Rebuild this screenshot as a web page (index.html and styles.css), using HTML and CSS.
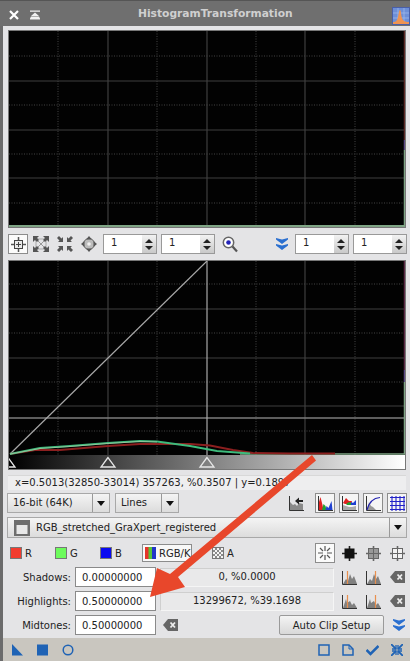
FILE: index.html
```html
<!DOCTYPE html>
<html lang="en">
<head>
<meta charset="utf-8">
<title>HistogramTransformation</title>
<link rel="stylesheet" href="styles.css">
</head>
<body>
<div class="window">
  <header class="titlebar">
    <svg class="tb-close" width="12" height="12" viewBox="0 0 12 12"><path d="M2 2l8 8M10 2l-8 8" stroke="#fff" stroke-width="2.2" fill="none"/></svg>
    <svg class="tb-shade" width="12" height="10" viewBox="0 0 12 10"><path d="M1 .5h10v1.300H1zM6 2.500l4 3.500H2zM2 6.500h8L11 8.500v1H1v-1z" fill="#f2f2f2"/></svg>
    <div class="tb-title">HistogramTransformation</div>
    <svg class="tb-icon" width="18" height="18" viewBox="0 0 18 18"><rect x=".5" y=".5" width="17" height="17" fill="#6d8fd8" stroke="#4a5fa8"/><path d="M1 6h16M1 11h16M6 1v16M12 1v16" stroke="#9fb8ea" stroke-width=".8"/><path d="M1 17v-2c3 0 4-1 5-5 1-4 1-7 2-7s1 5 2 8c1 3 3 4 7 4v2z" fill="#ef9350"/></svg>
  </header>

  <main class="content">
    <div class="chart">
      <svg width="396" height="196" viewBox="9 31 396 196">
        <rect x="9" y="31" width="396" height="196" fill="#020202"/>
        <path class="dots" d="M9 56h396M9 105h396M9 154h396M9 203h396M58 31v196M157 31v196M256 31v196M355 31v196"/>
        <path class="grid" d="M9 81h396M9 130h396M9 178h396M108 31v196M207 31v196M305 31v196"/>
        <path d="M9 226h396" stroke="#7fa585" stroke-width="2"/>
        <path d="M404.500 31v109" stroke="#5c2a26" stroke-width="1.500"/>
        <path d="M404.500 140v10" stroke="#5d4a86" stroke-width="1.500"/>
        <path d="M404.500 150v77" stroke="#7fa585" stroke-width="1.500"/>
      </svg>
    </div>

    <div class="toolbar">
      <button class="tool on"><svg width="15" height="15" viewBox="0 0 15 15"><path d="M7.500 0v15M0 7.500h15" stroke="#555" stroke-width="1.500"/><rect x="3.500" y="3.500" width="8" height="8" fill="#e8e8e8" stroke="#444"/><path d="M7.500 5v5M5 7.500h5" stroke="#444"/></svg></button>
      <span class="tool t1"><svg width="16" height="16" viewBox="0 0 16 16"><path d="M3 3h10v10H3z" fill="none" stroke="#aaa"/><path d="M3 3l10 10M13 3L3 13" stroke="#999"/><path d="M0 0h6L4 2 6 4 4 6 2 4 0 6zM16 0v6l-2-2-2 2-2-2 2-2-2-2zM0 16v-6l2 2 2-2 2 2-2 2 2 2zM16 16h-6l2-2-2-2 2-2 2 2 2-2z" fill="#555"/></svg></span>
      <span class="tool t2"><svg width="16" height="16" viewBox="0 0 16 16"><path d="M6 6H1l1.500-1.500L0 2l2-2 2.500 2.500L6 1zM10 6V1l1.500 1.500L14 0l2 2-2.500 2.500L15 6zM6 10v5l-1.500-1.500L2 16l-2-2 2.500-2.500L1 10zM10 10h5l-1.500 1.500L16 14l-2 2-2.500-2.500L10 15z" fill="#555"/></svg></span>
      <span class="tool t3"><svg width="16" height="16" viewBox="0 0 16 16"><circle cx="8" cy="8" r="5.500" fill="#bbb" stroke="#666"/><circle cx="8" cy="8" r="1.800" fill="#f0f0f0"/><path d="M8 0l3 3.500H5zM8 16l-3-3.500h6zM0 8l3.500-3v6zM16 8l-3.500 3V5z" fill="#555"/></svg></span>
      <div class="spin s1"><span class="val">1</span><span class="arrows"><i class="up"></i><i class="dn"></i></span></div>
      <div class="spin s2"><span class="val">1</span><span class="arrows"><i class="up"></i><i class="dn"></i></span></div>
      <svg class="zoom" width="16" height="17" viewBox="0 0 16 17"><circle cx="6.500" cy="6.500" r="5.200" fill="#fff" stroke="#666" stroke-width="1.500"/><circle cx="6.500" cy="6.500" r="2.300" fill="#2222b8"/><path d="M10.500 10.500l4.500 5" stroke="#555" stroke-width="2.200"/></svg>
      <svg class="chev c-top" width="12" height="12" viewBox="0 0 12 12"><path d="M0 0l6 1.500L12 0v1.500L6 6 0 1.500zM0 6l6 1.500L12 6v1.500L6 12 0 7.500z" fill="#2a6fd0"/></svg>
      <div class="spin s3"><span class="val">1</span><span class="arrows"><i class="up"></i><i class="dn"></i></span></div>
      <div class="spin s4"><span class="val">1</span><span class="arrows"><i class="up"></i><i class="dn"></i></span></div>
    </div>

    <div class="chart chart2">
      <svg width="396" height="208" viewBox="9 261 396 208">
        <defs>
          <linearGradient id="ramp"><stop offset="0" stop-color="#000"/><stop offset="1" stop-color="#fff"/></linearGradient>
        </defs>
        <rect x="9" y="261" width="396" height="194" fill="#020202"/>
        <rect x="9" y="455" width="396" height="14" fill="url(#ramp)"/>
        <path class="dots" d="M9 284h396M9 333h396M9 382h396M9 431h396M58 261v194M157 261v194M256 261v194M355 261v194"/>
        <path class="grid" d="M9 309h396M9 358h396M9 406h396M108 261v194M305 261v194"/>
        <path d="M9 418h396" stroke="#7d7d7d" stroke-width="1.500"/>
        <path d="M207 261v194" stroke="#a9a9a9" stroke-width="1.200"/>
        <path d="M10 454L207 261" stroke="#a8a8a8" stroke-width="1.200" fill="none"/>
        <path d="M404.500 261v109" stroke="#5c2a46" stroke-width="1.500"/>
        <path d="M404.500 370v12" stroke="#5d4a86" stroke-width="1.500"/>
        <path d="M404.500 382v72" stroke="#7fa585" stroke-width="1.500"/>
        <path d="M240 454H405" stroke="#7fa585" stroke-width="1.500"/>
        <path d="M10 454L35 450 60 450 108 446 140 444 190 444 210 445.500 233 450 253 453 290 453.500 335 453.500" stroke="#8c1f1f" stroke-width="1.800" fill="none"/>
        <path d="M10 454L40 448 70 446 108 443 140 441 157 441.500 190 446 217 451 250 453.500" stroke="#3dbb7c" stroke-width="1.800" fill="none"/>
        <path d="M10 454L40 448.500 70 446.500 108 443.500 140 441.500 157 442" stroke="#b8c8a8" stroke-width=".7" fill="none"/>
        <path class="tri" d="M8 457.500L15 467H8z"/>
        <path class="tri" d="M108 457.500L101 467H115z"/>
        <path class="tri" d="M207 457.500L200 467H214z"/>
      </svg>
    </div>

    <div class="readout">x=0.5013(32850-33014) 357263, %0.3507 | y=0.1897</div>

    <div class="options">
      <div class="combo c-bit"><span class="combo-label">16-bit (64K)</span><span class="combo-drop"><i></i></span></div>
      <div class="combo c-mode"><span class="combo-label">Lines</span><span class="combo-drop"><i></i></span></div>
      <div class="opt-icons">
        <svg class="oi plain" width="15" height="15" viewBox="0 0 15 15"><path d="M.5 0v14.500H15" stroke="#333" fill="none"/><path d="M1 14V6l3 3 2-1 2 2 2-3 4 1v6z" fill="#8a8a8a"/><path d="M6 5l4-3.500V4h4v2h-4v2.500z" fill="#222"/></svg>
        <span class="oi box"><svg width="15" height="15" viewBox="0 0 15 15"><path d="M.5 0v14.500H15" stroke="#333" fill="none"/><path d="M1 14V6l1.500-5 2 8 1 5z" fill="#e02020"/><path d="M4 14l1.500-6 2 2 1 4z" fill="#22a030"/><path d="M7.500 14l1-4 2 2 3-7 1 9z" fill="#2040d0"/></svg></span>
        <span class="oi box"><svg width="15" height="15" viewBox="0 0 15 15"><path d="M.5 0v14.500H15" stroke="#333" fill="none"/><path d="M1 14V9l3 1 3 1 3 0 4-1v4z" fill="#aaa"/><path d="M1 7l3-5 3 3h3l-1 3H3z" fill="#e02020"/><path d="M4 8l3-2 3 1 1 2H5z" fill="#22a030"/><path d="M9 6l2 1 3-3v5H9z" fill="#2040d0"/></svg></span>
        <span class="oi box"><svg width="15" height="15" viewBox="0 0 15 15"><path d="M.5 0v14.500H15" stroke="#333" fill="none"/><path d="M1 14l2-8 2 4 2 1 3 3z" fill="#999"/><path d="M1 14C3 6 7 2 14 1.500" stroke="#2222b0" stroke-width="1.200" fill="none"/></svg></span>
        <span class="oi box"><svg width="15" height="15" viewBox="0 0 15 15"><path d="M0 1.500h15M0 5.500h15M0 9.500h15M0 13.500h15M2 0v15M6 0v15M10 0v15M14 0v15" stroke="#2222c8" stroke-width="1.100"/></svg></span>
      </div>
    </div>

    <div class="combo view">
      <svg class="view-icon" width="16" height="16" viewBox="0 0 16 16"><rect width="16" height="16" fill="#6e6e6e"/><rect x="2.500" y="5" width="11" height="9" fill="#e8e8e8"/></svg>
      <span class="combo-label">RGB_stretched_GraXpert_registered</span>
      <span class="combo-drop"><i></i></span>
    </div>

    <div class="channels">
      <span class="swatch red"></span><span class="ch-label l-r">R</span>
      <span class="swatch green"></span><span class="ch-label l-g">G</span>
      <span class="swatch blue"></span><span class="ch-label l-b">B</span>
      <span class="rgbk"><svg width="11" height="12" viewBox="0 0 11 12"><rect width="4" height="12" fill="#e5352b"/><rect x="3.500" width="4" height="12" fill="#58c43a"/><rect x="7" width="4" height="12" fill="#2336c8"/></svg>RGB/K</span>
      <span class="swatch checker"></span><span class="ch-label l-a">A</span>
      <div class="clip-icons">
        <span class="clipbtn on"><svg width="14" height="14" viewBox="0 0 14 14"><path d="M7 0v5M7 9v5M0 7h5M9 7h5M2 2l3 3M9 9l3 3M12 2L9 5M5 9l-3 3" stroke="#555" stroke-width="1.200"/></svg></span>
        <svg width="15" height="15" viewBox="0 0 15 15"><path d="M7.500 0v15M0 7.500h15" stroke="#222" stroke-width="1.600"/><rect x="2.500" y="2.500" width="10" height="10" fill="#111"/></svg>
        <svg width="15" height="15" viewBox="0 0 15 15"><path d="M7.500 0v15M0 7.500h15" stroke="#666" stroke-width="1.600"/><rect x="2.500" y="2.500" width="10" height="10" fill="#999" stroke="#666"/><path d="M7.500 3v9M3 7.500h9" stroke="#666"/></svg>
        <svg width="15" height="15" viewBox="0 0 15 15"><path d="M7.500 0v15M0 7.500h15" stroke="#666" stroke-width="1.600"/><rect x="2.500" y="2.500" width="10" height="10" fill="#f2f2f2" stroke="#666"/><path d="M7.500 3v9M3 7.500h9" stroke="#666"/></svg>
      </div>
    </div>

    <div class="param">
      <label>Shadows:</label><div class="field">0.00000000</div><div class="stat">0, %0.0000</div>
      <svg class="mini" width="15" height="15" viewBox="0 0 15 15"><path d="M.5 1v13.500H15" stroke="#333" fill="none"/><path d="M1 14l3-5 2 2 2-7 2 5 2-3 3 8z" fill="#808080"/><path d="M5.500 1v13" stroke="#e98f4e" stroke-width="1.200"/></svg>
      <svg class="mini" width="15" height="15" viewBox="0 0 15 15"><path d="M.5 1v13.500H15" stroke="#333" fill="none"/><path d="M1 14l3-5 2 2 2-7 2 5 2-3 3 8z" fill="#808080"/><path d="M9.500 1v13" stroke="#e98f4e" stroke-width="1.200"/></svg>
      <svg class="mini del" width="15" height="12" viewBox="0 0 15 12"><path d="M5 0h10v12H5L0 6z" fill="#666"/><path d="M7.500 3.500l4.500 5M12 3.500l-4.500 5" stroke="#eee" stroke-width="1.800"/></svg>
    </div>
    <div class="param">
      <label>Highlights:</label><div class="field">0.50000000</div><div class="stat">13299672, %39.1698</div>
      <svg class="mini" width="15" height="15" viewBox="0 0 15 15"><path d="M.5 1v13.500H15" stroke="#333" fill="none"/><path d="M1 14l3-9 1 4 3-2 2 4 2-2 3 5z" fill="#808080"/><path d="M5.500 1v13" stroke="#e98f4e" stroke-width="1.200"/></svg>
      <svg class="mini" width="15" height="15" viewBox="0 0 15 15"><path d="M.5 1v13.500H15" stroke="#333" fill="none"/><path d="M1 14l3-9 1 4 3-2 2 4 2-2 3 5z" fill="#808080"/><path d="M9.500 1v13" stroke="#e98f4e" stroke-width="1.200"/></svg>
      <svg class="mini del" width="15" height="12" viewBox="0 0 15 12"><path d="M5 0h10v12H5L0 6z" fill="#666"/><path d="M7.500 3.500l4.500 5M12 3.500l-4.500 5" stroke="#eee" stroke-width="1.800"/></svg>
    </div>
    <div class="param">
      <label>Midtones:</label><div class="field">0.50000000</div>
      <svg class="mini del single" width="15" height="12" viewBox="0 0 15 12"><path d="M5 0h10v12H5L0 6z" fill="#666"/><path d="M7.500 3.500l4.500 5M12 3.500l-4.500 5" stroke="#eee" stroke-width="1.800"/></svg>
      <button class="auto">Auto Clip Setup</button>
      <svg class="chev c-auto" width="12" height="12" viewBox="0 0 12 12"><path d="M0 0l6 1.500L12 0v1.500L6 6 0 1.500zM0 6l6 1.500L12 6v1.500L6 12 0 7.500z" fill="#2a6fd0"/></svg>
    </div>
  </main>

  <footer class="footer">
    <div class="foot-group">
      <svg width="12" height="12" viewBox="0 0 12 12"><path d="M0 0l11 11.500H0z" fill="#1f63b5"/></svg>
      <svg width="12" height="12" viewBox="0 0 12 12"><rect width="11" height="11" y=".5" fill="#1f63b5"/></svg>
      <svg width="12" height="12" viewBox="0 0 12 12"><circle cx="6" cy="6" r="4.800" fill="none" stroke="#1f63b5" stroke-width="1.500"/></svg>
    </div>
    <div class="foot-group right">
      <svg width="12" height="12" viewBox="0 0 12 12"><rect x="1" y="1" width="10" height="10" fill="none" stroke="#1f63b5" stroke-width="1.500"/></svg>
      <svg width="12" height="12" viewBox="0 0 12 12"><path d="M1 1h6l4 4v6H1z" fill="none" stroke="#1f63b5" stroke-width="1.500"/><path d="M7 1v4h4" fill="none" stroke="#1f63b5"/></svg>
      <svg width="13" height="12" viewBox="0 0 13 12"><path d="M.5 6l4 4 8-8" fill="none" stroke="#1f63b5" stroke-width="2.500"/></svg>
      <svg width="12" height="12" viewBox="0 0 12 12"><path d="M0 0l5 5M12 0L7 5M0 12l5-5M12 12L7 7" stroke="#1f63b5" stroke-width="1.800"/><path d="M5 1v4H1M7 1v4h4M5 11V7H1M7 11V7h4" fill="none" stroke="#1f63b5" stroke-width="1.300"/></svg>
    </div>
  </footer>
</div>

<svg class="annotation" width="410" height="661" viewBox="0 0 410 661">
  <path d="M312 455L316 460.500 178 577 185 587 150 597 157 568 170 574z" fill="#e8472b"/>
</svg>
</body>
</html>
```
FILE: styles.css
```css
* { box-sizing: border-box; }
html, body { margin: 0; padding: 0; }
body {
  width: 410px;
  height: 661px;
  overflow: hidden;
  position: relative;
  font-family: "DejaVu Sans", sans-serif;
  font-size: 10px;
  color: #222;
  background: #e4e4e6;
}
svg { display: block; flex: none; }

.window { display: flex; flex-direction: column; height: 661px; }

.titlebar {
  height: 26px;
  flex: none;
  display: flex;
  align-items: center;
  background: #6f6f6f;
  border-top: 1px solid #555;
  padding-left: 8px;
}
.tb-close { margin-top: 3px; }
.tb-shade { margin: 3px 0 0 9px; }
.tb-title {
  width: 155px;
  margin: 0 0 0 97px;
  font-size: 10.700px;
  font-weight: bold;
  color: #cfcfcf;
  white-space: nowrap;
}
.tb-icon { margin: 4px 0 0 99px; }

.content {
  flex: 1;
  display: flex;
  flex-direction: column;
  padding: 4px 3px 0 5px;
  border-left: 3px solid #6b6b6b;
}

.chart {
  width: 398px;
  flex: none;
  border: 1px solid #777;
  background: #000;
}
.chart2 { margin-top: 6px; }
.dots { stroke: #2e2e2e; stroke-width: 1.500; stroke-dasharray: 1 1.500; fill: none; }
.grid { stroke: #3f3f3f; stroke-width: 1.200; fill: none; }
.tri { fill: none; stroke: #e6e6e6; stroke-width: 1.300; }

.toolbar { display: flex; align-items: center; height: 20px; flex: none; margin-top: 6px; }
.tool {
  width: 16px; height: 20px; padding: 0; flex: none;
  display: flex; align-items: center; justify-content: center;
  background: none; border: 0;
}
.tool.on { width: 20px; background: #fbfbfb; border: 1px solid #8c8c8c; }
.t1 { margin-left: 5px; }
.t2 { margin-left: 8px; }
.t3 { margin-left: 8px; }

.spin {
  width: 54px; height: 20px; flex: none;
  display: flex;
  background: #fff;
  border: 1px solid #999;
}
.s1 { margin-left: 6px; }
.s2 { margin-left: 4px; }
.s3 { margin-left: 7px; }
.s4 { margin-left: 4px; }
.val { flex: 1; padding: 2px 0 0 7px; }
.arrows {
  width: 14px;
  display: flex; flex-direction: column; align-items: center; justify-content: center; gap: 3px;
  background: linear-gradient(#f2f2f2, #c9c9c9);
}
.arrows i { width: 0; height: 0; border-left: 4px solid transparent; border-right: 4px solid transparent; }
.up { border-bottom: 4px solid #222; }
.dn { border-top: 4px solid #222; }
.zoom { margin-left: 7px; }
.c-top { margin-left: 38px; }

.readout {
  width: 398px; height: 15px; flex: none;
  margin-top: 5px;
  padding-left: 7px;
  background: #eeeeef;
  border-top: 1px solid #d8d8d8;
  line-height: 13px;
  white-space: nowrap;
  overflow: hidden;
}

.options { display: flex; align-items: center; height: 20px; flex: none; margin-top: 3px; }
.combo {
  height: 20px; flex: none;
  display: flex;
  align-items: center;
  background: linear-gradient(#f4f4f4, #dcdcdc);
  border: 1px solid #a8a8a8;
}
.c-bit { width: 103px; margin-left: -1px; }
.c-mode { width: 64px; margin-left: 5px; }
.combo-label { flex: 1; padding-left: 5px; white-space: nowrap; line-height: 16px; }
.combo-drop {
  width: 17px; height: 100%;
  display: flex; align-items: center; justify-content: center;
  border-left: 1px solid #999;
}
.combo-drop i { width: 0; height: 0; border-left: 4.500px solid transparent; border-right: 4.500px solid transparent; border-top: 5px solid #111; }

.opt-icons { display: flex; align-items: center; margin-left: auto; gap: 4px; }
.oi.plain { margin-right: 7px; }
.box {
  width: 20px; height: 20px;
  display: flex; align-items: center; justify-content: center;
  background: #f5f5f5; border: 1px solid #8c8c8c;
}

.view { width: 400px; height: 21px; margin: 4px 0 0 -1px; }
.view .combo-label { padding-left: 6px; }
.view-icon { margin-left: 6px; }

.channels { display: flex; align-items: center; height: 20px; flex: none; margin-top: 5px; }
.swatch { width: 12px; height: 12px; flex: none; border: 1px solid #777; margin-left: 2px; }
.red { background: #f23c2f; }
.green { background: #6dfb5c; }
.blue { background: #0a0af0; }
.checker {
  margin-left: 20px;
  background: repeating-conic-gradient(#8a8a8a 0 25%, #f4f4f4 0 50%) 0 0 / 4px 4px;
}
.ch-label { margin-left: 3px; flex: none; }
.l-r { width: 28px; }
.l-g { width: 28px; }
.l-b { width: 27px; }
.rgbk {
  width: 50px; height: 18px; flex: none;
  display: flex; align-items: center; gap: 3px;
  padding-left: 2px;
  background: #f8f8f8;
  border: 1px solid #8c8c8c;
}
.clip-icons { display: flex; align-items: center; gap: 9px; margin-left: auto; margin-right: 2px; }
.clipbtn {
  width: 20px; height: 20px;
  display: flex; align-items: center; justify-content: center;
  background: #fafafa; border: 1px solid #8c8c8c;
  margin-right: -2px;
}

.param { display: flex; align-items: center; height: 20px; flex: none; margin-top: 4px; }
.param label { width: 63px; flex: none; text-align: right; white-space: nowrap; }
.field {
  width: 81px; height: 20px; flex: none;
  margin-left: 4px;
  padding: 2px 0 0 6px;
  background: #fff;
  border: 1px solid #8a8a8a;
  line-height: 15px;
}
.stat {
  width: 174px; height: 19px; flex: none;
  margin: 0 8px 0 4px;
  text-align: center;
  background: #e9e9ea;
  border: 1px solid #f5f5f5;
  border-top-color: #cfcfcf;
  border-left-color: #cfcfcf;
  line-height: 16px;
}
.mini { margin-right: 9px; }
.mini.del { margin: 0; }
.mini.single { margin-left: 7px; }
.auto {
  width: 105px; height: 20px; flex: none;
  margin-left: 101px;
  padding: 0;
  background: linear-gradient(#f4f4f4, #d8d8d8);
  border: 1px solid #9a9a9a;
  border-radius: 2px;
  font-family: "DejaVu Sans", sans-serif;
  font-size: 10px;
  color: #222;
}
.c-auto { margin-left: 9px; }

.footer {
  height: 23px;
  flex: none;
  display: flex;
  align-items: center;
  justify-content: space-between;
  padding: 0 7px 0 9px;
  background: #c9c6bf;
  border-left: 3px solid #6b6b6b;
}
.foot-group { display: flex; align-items: center; gap: 13px; }
.foot-group.right { gap: 12px; }

.annotation { position: absolute; left: 0; top: 0; pointer-events: none; }
```
